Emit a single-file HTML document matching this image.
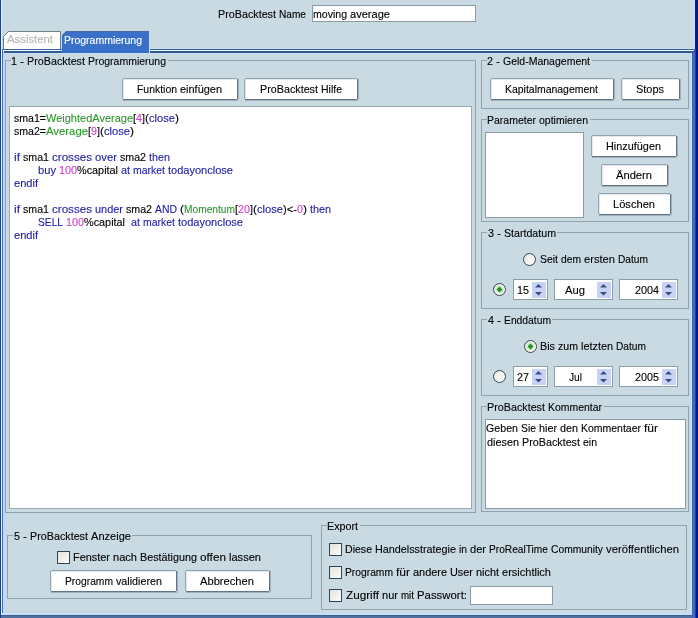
<!DOCTYPE html>
<html><head><meta charset="utf-8"><title>ProBacktest</title>
<style>
html,body{margin:0;padding:0}
body{width:698px;height:618px;overflow:hidden;position:relative;background:#c9dae3;font-family:"Liberation Sans",sans-serif;font-size:11px}
#ui>div{position:absolute}
#tx text{white-space:pre;stroke-width:0.12px}
#tx tspan{}
#tx{position:absolute;left:0;top:0;fill:#000;stroke:#000;font-family:"Liberation Sans",sans-serif;font-size:11px;pointer-events:none;will-change:transform}
</style></head><body>
<div id="ui">
<div style="left:0px;top:0px;width:1px;height:618px;background:#1a4088"></div>
<div style="left:1px;top:0px;width:1px;height:615px;background:#d0fcfc"></div>
<div style="left:693px;top:0px;width:1px;height:49px;background:#c4e0fc"></div>
<div style="left:694px;top:0px;width:1px;height:49px;background:#c0dcfc"></div>
<div style="left:691px;top:53px;width:1px;height:562px;background:#d4e4f8"></div>
<div style="left:692px;top:53px;width:1px;height:565px;background:#3068b8"></div>
<div style="left:693px;top:53px;width:1px;height:565px;background:#3c70c8"></div>
<div style="left:694px;top:53px;width:1px;height:565px;background:#4a64c0"></div>
<div style="left:695px;top:0px;width:1px;height:618px;background:#283a90"></div>
<div style="left:696px;top:0px;width:1px;height:618px;background:#001890"></div>
<div style="left:697px;top:0px;width:1px;height:618px;background:#001890"></div>
<div style="left:695px;top:0px;width:1px;height:49px;background:#0a1a9a"></div>
<div style="left:2px;top:613px;width:690px;height:1px;background:#c4e0fc"></div>
<div style="left:1px;top:614px;width:691px;height:1px;background:#c4e0fc"></div>
<div style="left:1px;top:615px;width:691px;height:1px;background:#40608c"></div>
<div style="left:1px;top:616px;width:691px;height:1px;background:#5070a0"></div>
<div style="left:1px;top:617px;width:691px;height:1px;background:#5070a0"></div>
<div style="left:312px;top:5px;width:164px;height:17px;background:#fff;border:1px solid #8b9ba6;box-sizing:border-box"></div>
<div style="left:2px;top:48px;width:693px;height:1px;background:#c4e0fc"></div>
<div style="left:2px;top:49px;width:693px;height:1px;background:#40609c"></div>
<div style="left:2px;top:50px;width:692px;height:1px;background:#e0fcfc"></div>
<div style="left:2px;top:51px;width:692px;height:1px;background:#385890"></div>
<div style="left:2px;top:52px;width:692px;height:1px;background:#385890"></div>
<div style="left:4px;top:53px;width:687px;height:1px;background:#c4e0fc"></div>
<div style="left:694px;top:50px;width:1px;height:3px;background:#3a5aa0"></div>
<div style="left:2px;top:49px;width:1px;height:564px;background:#4a6aa8"></div>
<div style="left:3px;top:51px;width:1px;height:562px;background:#c4dcfc"></div>
<div style="left:4px;top:53px;width:1px;height:560px;background:#c0d4f0"></div>
<svg style="position:absolute;left:3px;top:31px" width="58" height="18"><path d="M0.5 18 V5.5 L5.5 0.5 H57.5 V18" fill="#fdfdfb" stroke="#6f7f86" stroke-width="1"/></svg>
<svg style="position:absolute;left:62px;top:31px" width="88" height="22"><path d="M0 22 V4 L4 0 H87 V22 Z" fill="#3a70c8"/><path d="M0.5 4.5 L4.5 0.5 H86.5" fill="none" stroke="#4a6aa4"/><path d="M87.5 1 V22" stroke="#c4e0fc"/></svg>
<div style="left:5px;top:60px;width:471px;height:453px;border:1px solid #8fa3ae;box-sizing:border-box"></div>
<div style="left:11px;top:54px;width:157px;height:12px;background:#c9dae3"></div>
<div style="left:123px;top:79px;width:114px;height:20px;background:#fff"></div>
<div style="left:123px;top:78px;width:114px;height:1px;background:#94a4b0"></div>
<div style="left:122px;top:79px;width:1px;height:20px;background:#94a4b0"></div>
<div style="left:237px;top:79px;width:1px;height:20px;background:#647480"></div>
<div style="left:123px;top:99px;width:114px;height:1px;background:#647480"></div>
<div style="left:238px;top:79px;width:1px;height:21px;background:#a0b0bc"></div>
<div style="left:123px;top:100px;width:115px;height:1px;background:#a0b0bc"></div>
<div style="left:123px;top:79px;width:114px;height:1px;background:#e2e8ec"></div>
<div style="left:123px;top:79px;width:1px;height:20px;background:#e2e8ec"></div>
<div style="left:245px;top:79px;width:112px;height:20px;background:#fff"></div>
<div style="left:245px;top:78px;width:112px;height:1px;background:#94a4b0"></div>
<div style="left:244px;top:79px;width:1px;height:20px;background:#94a4b0"></div>
<div style="left:357px;top:79px;width:1px;height:20px;background:#647480"></div>
<div style="left:245px;top:99px;width:112px;height:1px;background:#647480"></div>
<div style="left:358px;top:79px;width:1px;height:21px;background:#a0b0bc"></div>
<div style="left:245px;top:100px;width:113px;height:1px;background:#a0b0bc"></div>
<div style="left:245px;top:79px;width:112px;height:1px;background:#e2e8ec"></div>
<div style="left:245px;top:79px;width:1px;height:20px;background:#e2e8ec"></div>
<div style="left:9px;top:106px;width:463px;height:403px;background:#fff;border:1px solid #98aab0;box-sizing:border-box"></div>
<div style="left:481px;top:60px;width:208px;height:49px;border:1px solid #8fa3ae;box-sizing:border-box"></div>
<div style="left:487px;top:54px;width:105px;height:12px;background:#c9dae3"></div>
<div style="left:491px;top:79px;width:122px;height:20px;background:#fff"></div>
<div style="left:491px;top:78px;width:122px;height:1px;background:#94a4b0"></div>
<div style="left:490px;top:79px;width:1px;height:20px;background:#94a4b0"></div>
<div style="left:613px;top:79px;width:1px;height:20px;background:#647480"></div>
<div style="left:491px;top:99px;width:122px;height:1px;background:#647480"></div>
<div style="left:614px;top:79px;width:1px;height:21px;background:#a0b0bc"></div>
<div style="left:491px;top:100px;width:123px;height:1px;background:#a0b0bc"></div>
<div style="left:491px;top:79px;width:122px;height:1px;background:#e2e8ec"></div>
<div style="left:491px;top:79px;width:1px;height:20px;background:#e2e8ec"></div>
<div style="left:622px;top:79px;width:57px;height:20px;background:#fff"></div>
<div style="left:622px;top:78px;width:57px;height:1px;background:#94a4b0"></div>
<div style="left:621px;top:79px;width:1px;height:20px;background:#94a4b0"></div>
<div style="left:679px;top:79px;width:1px;height:20px;background:#647480"></div>
<div style="left:622px;top:99px;width:57px;height:1px;background:#647480"></div>
<div style="left:680px;top:79px;width:1px;height:21px;background:#a0b0bc"></div>
<div style="left:622px;top:100px;width:58px;height:1px;background:#a0b0bc"></div>
<div style="left:622px;top:79px;width:57px;height:1px;background:#e2e8ec"></div>
<div style="left:622px;top:79px;width:1px;height:20px;background:#e2e8ec"></div>
<div style="left:481px;top:119px;width:208px;height:103px;border:1px solid #8fa3ae;box-sizing:border-box"></div>
<div style="left:487px;top:113px;width:103px;height:12px;background:#c9dae3"></div>
<div style="left:485px;top:132px;width:99px;height:86px;background:#fff;border:1px solid #8b9ba6;box-sizing:border-box"></div>
<div style="left:592px;top:136px;width:84px;height:20px;background:#fff"></div>
<div style="left:592px;top:135px;width:84px;height:1px;background:#94a4b0"></div>
<div style="left:591px;top:136px;width:1px;height:20px;background:#94a4b0"></div>
<div style="left:676px;top:136px;width:1px;height:20px;background:#647480"></div>
<div style="left:592px;top:156px;width:84px;height:1px;background:#647480"></div>
<div style="left:677px;top:136px;width:1px;height:21px;background:#a0b0bc"></div>
<div style="left:592px;top:157px;width:85px;height:1px;background:#a0b0bc"></div>
<div style="left:592px;top:136px;width:84px;height:1px;background:#e2e8ec"></div>
<div style="left:592px;top:136px;width:1px;height:20px;background:#e2e8ec"></div>
<div style="left:602px;top:165px;width:65px;height:20px;background:#fff"></div>
<div style="left:602px;top:164px;width:65px;height:1px;background:#94a4b0"></div>
<div style="left:601px;top:165px;width:1px;height:20px;background:#94a4b0"></div>
<div style="left:667px;top:165px;width:1px;height:20px;background:#647480"></div>
<div style="left:602px;top:185px;width:65px;height:1px;background:#647480"></div>
<div style="left:668px;top:165px;width:1px;height:21px;background:#a0b0bc"></div>
<div style="left:602px;top:186px;width:66px;height:1px;background:#a0b0bc"></div>
<div style="left:602px;top:165px;width:65px;height:1px;background:#e2e8ec"></div>
<div style="left:602px;top:165px;width:1px;height:20px;background:#e2e8ec"></div>
<div style="left:599px;top:194px;width:71px;height:20px;background:#fff"></div>
<div style="left:599px;top:193px;width:71px;height:1px;background:#94a4b0"></div>
<div style="left:598px;top:194px;width:1px;height:20px;background:#94a4b0"></div>
<div style="left:670px;top:194px;width:1px;height:20px;background:#647480"></div>
<div style="left:599px;top:214px;width:71px;height:1px;background:#647480"></div>
<div style="left:671px;top:194px;width:1px;height:21px;background:#a0b0bc"></div>
<div style="left:599px;top:215px;width:72px;height:1px;background:#a0b0bc"></div>
<div style="left:599px;top:194px;width:71px;height:1px;background:#e2e8ec"></div>
<div style="left:599px;top:194px;width:1px;height:20px;background:#e2e8ec"></div>
<div style="left:481px;top:232px;width:208px;height:77px;border:1px solid #8fa3ae;box-sizing:border-box"></div>
<div style="left:487px;top:226px;width:70px;height:12px;background:#c9dae3"></div>
<svg style="position:absolute;left:523px;top:253px" width="13" height="13"><defs><linearGradient id="rg523253" x1="0" y1="0" x2="1" y2="1"><stop offset="0" stop-color="#e6e8e0"/><stop offset="1" stop-color="#ffffff"/></linearGradient></defs><circle cx="6.5" cy="6.5" r="6" fill="url(#rg523253)" stroke="#36464f" stroke-width="1"/></svg>
<svg style="position:absolute;left:493px;top:283px" width="13" height="13"><defs><linearGradient id="rg493283" x1="0" y1="0" x2="1" y2="1"><stop offset="0" stop-color="#e6e8e0"/><stop offset="1" stop-color="#ffffff"/></linearGradient></defs><circle cx="6.5" cy="6.5" r="6" fill="url(#rg493283)" stroke="#36464f" stroke-width="1"/><circle cx="6.5" cy="6.5" r="3.8" fill="#c4f0bc"/><path d="M6.5 3.6 L9.4 6.5 L6.5 9.4 L3.6 6.5 Z" fill="#2e8a2e"/></svg>
<div style="left:513px;top:279px;width:35px;height:21px;background:#fff;border:1px solid #8d9da8;box-sizing:border-box"></div>
<div style="left:532px;top:282px;width:14px;height:16px;background:#c6d2f6"></div>
<svg style="position:absolute;left:532px;top:282px" width="14" height="16"><path d="M3 5.5 L6.5 2 L10 5.5 Z M3 10 L6.5 13.5 L10 10 Z" fill="#3e4c82"/></svg>
<div style="left:554px;top:279px;width:59px;height:21px;background:#fff;border:1px solid #8d9da8;box-sizing:border-box"></div>
<div style="left:597px;top:282px;width:14px;height:16px;background:#c6d2f6"></div>
<svg style="position:absolute;left:597px;top:282px" width="14" height="16"><path d="M3 5.5 L6.5 2 L10 5.5 Z M3 10 L6.5 13.5 L10 10 Z" fill="#3e4c82"/></svg>
<div style="left:619px;top:279px;width:59px;height:21px;background:#fff;border:1px solid #8d9da8;box-sizing:border-box"></div>
<div style="left:662px;top:282px;width:14px;height:16px;background:#c6d2f6"></div>
<svg style="position:absolute;left:662px;top:282px" width="14" height="16"><path d="M3 5.5 L6.5 2 L10 5.5 Z M3 10 L6.5 13.5 L10 10 Z" fill="#3e4c82"/></svg>
<div style="left:481px;top:319px;width:208px;height:77px;border:1px solid #8fa3ae;box-sizing:border-box"></div>
<div style="left:487px;top:313px;width:65px;height:12px;background:#c9dae3"></div>
<svg style="position:absolute;left:524px;top:340px" width="13" height="13"><defs><linearGradient id="rg524340" x1="0" y1="0" x2="1" y2="1"><stop offset="0" stop-color="#e6e8e0"/><stop offset="1" stop-color="#ffffff"/></linearGradient></defs><circle cx="6.5" cy="6.5" r="6" fill="url(#rg524340)" stroke="#36464f" stroke-width="1"/><circle cx="6.5" cy="6.5" r="3.8" fill="#c4f0bc"/><path d="M6.5 3.6 L9.4 6.5 L6.5 9.4 L3.6 6.5 Z" fill="#2e8a2e"/></svg>
<svg style="position:absolute;left:493px;top:370px" width="13" height="13"><defs><linearGradient id="rg493370" x1="0" y1="0" x2="1" y2="1"><stop offset="0" stop-color="#e6e8e0"/><stop offset="1" stop-color="#ffffff"/></linearGradient></defs><circle cx="6.5" cy="6.5" r="6" fill="url(#rg493370)" stroke="#36464f" stroke-width="1"/></svg>
<div style="left:513px;top:366px;width:35px;height:21px;background:#fff;border:1px solid #8d9da8;box-sizing:border-box"></div>
<div style="left:532px;top:369px;width:14px;height:16px;background:#c6d2f6"></div>
<svg style="position:absolute;left:532px;top:369px" width="14" height="16"><path d="M3 5.5 L6.5 2 L10 5.5 Z M3 10 L6.5 13.5 L10 10 Z" fill="#3e4c82"/></svg>
<div style="left:554px;top:366px;width:59px;height:21px;background:#fff;border:1px solid #8d9da8;box-sizing:border-box"></div>
<div style="left:597px;top:369px;width:14px;height:16px;background:#c6d2f6"></div>
<svg style="position:absolute;left:597px;top:369px" width="14" height="16"><path d="M3 5.5 L6.5 2 L10 5.5 Z M3 10 L6.5 13.5 L10 10 Z" fill="#3e4c82"/></svg>
<div style="left:619px;top:366px;width:59px;height:21px;background:#fff;border:1px solid #8d9da8;box-sizing:border-box"></div>
<div style="left:662px;top:369px;width:14px;height:16px;background:#c6d2f6"></div>
<svg style="position:absolute;left:662px;top:369px" width="14" height="16"><path d="M3 5.5 L6.5 2 L10 5.5 Z M3 10 L6.5 13.5 L10 10 Z" fill="#3e4c82"/></svg>
<div style="left:481px;top:406px;width:208px;height:106px;border:1px solid #8fa3ae;box-sizing:border-box"></div>
<div style="left:487px;top:400px;width:117px;height:12px;background:#c9dae3"></div>
<div style="left:485px;top:419px;width:201px;height:90px;background:#fff;border:1px solid #8b9ba6;box-sizing:border-box"></div>
<div style="left:7px;top:535px;width:305px;height:64px;border:1px solid #8fa3ae;box-sizing:border-box"></div>
<div style="left:13px;top:529px;width:119px;height:12px;background:#c9dae3"></div>
<div style="left:57px;top:551px;width:13px;height:13px;border:1px solid #2c4860;box-sizing:border-box;background:linear-gradient(135deg,#e6e2da,#fafcfc)"></div>
<div style="left:51px;top:571px;width:125px;height:20px;background:#fff"></div>
<div style="left:51px;top:570px;width:125px;height:1px;background:#94a4b0"></div>
<div style="left:50px;top:571px;width:1px;height:20px;background:#94a4b0"></div>
<div style="left:176px;top:571px;width:1px;height:20px;background:#647480"></div>
<div style="left:51px;top:591px;width:125px;height:1px;background:#647480"></div>
<div style="left:177px;top:571px;width:1px;height:21px;background:#a0b0bc"></div>
<div style="left:51px;top:592px;width:126px;height:1px;background:#a0b0bc"></div>
<div style="left:51px;top:571px;width:125px;height:1px;background:#e2e8ec"></div>
<div style="left:51px;top:571px;width:1px;height:20px;background:#e2e8ec"></div>
<div style="left:186px;top:571px;width:83px;height:20px;background:#fff"></div>
<div style="left:186px;top:570px;width:83px;height:1px;background:#94a4b0"></div>
<div style="left:185px;top:571px;width:1px;height:20px;background:#94a4b0"></div>
<div style="left:269px;top:571px;width:1px;height:20px;background:#647480"></div>
<div style="left:186px;top:591px;width:83px;height:1px;background:#647480"></div>
<div style="left:270px;top:571px;width:1px;height:21px;background:#a0b0bc"></div>
<div style="left:186px;top:592px;width:84px;height:1px;background:#a0b0bc"></div>
<div style="left:186px;top:571px;width:83px;height:1px;background:#e2e8ec"></div>
<div style="left:186px;top:571px;width:1px;height:20px;background:#e2e8ec"></div>
<div style="left:321px;top:525px;width:366px;height:85px;border:1px solid #8fa3ae;box-sizing:border-box"></div>
<div style="left:327px;top:519px;width:33px;height:12px;background:#c9dae3"></div>
<div style="left:329px;top:543px;width:13px;height:13px;border:1px solid #2c4860;box-sizing:border-box;background:linear-gradient(135deg,#e6e2da,#fafcfc)"></div>
<div style="left:329px;top:566px;width:13px;height:13px;border:1px solid #2c4860;box-sizing:border-box;background:linear-gradient(135deg,#e6e2da,#fafcfc)"></div>
<div style="left:329px;top:589px;width:13px;height:13px;border:1px solid #2c4860;box-sizing:border-box;background:linear-gradient(135deg,#e6e2da,#fafcfc)"></div>
<div style="left:470px;top:586px;width:83px;height:19px;background:#fff;border:1px solid #8b9ba6;box-sizing:border-box"></div>
</div>
<svg id="tx" width="698" height="618" xml:space="preserve">
<text y="18"><tspan x="218" textLength="58" lengthAdjust="spacingAndGlyphs">ProBacktest</tspan> <tspan x="279" textLength="27" lengthAdjust="spacingAndGlyphs">Name</tspan></text>
<text y="18"><tspan x="313" textLength="34" lengthAdjust="spacingAndGlyphs">moving</tspan> <tspan x="350" textLength="40" lengthAdjust="spacingAndGlyphs">average</tspan></text>
<text y="43" fill="#b4b4b4" stroke="#b4b4b4"><tspan x="7" textLength="46" lengthAdjust="spacingAndGlyphs">Assistent</tspan></text>
<text y="44" fill="#ffffff" stroke="#ffffff"><tspan x="64" textLength="78" lengthAdjust="spacingAndGlyphs">Programmierung</tspan></text>
<text y="65"><tspan x="11" textLength="6" lengthAdjust="spacingAndGlyphs">1</tspan> <tspan x="20" textLength="4" lengthAdjust="spacingAndGlyphs">-</tspan> <tspan x="27" textLength="58" lengthAdjust="spacingAndGlyphs">ProBacktest</tspan> <tspan x="88" textLength="78" lengthAdjust="spacingAndGlyphs">Programmierung</tspan></text>
<text y="93"><tspan x="137" textLength="40" lengthAdjust="spacingAndGlyphs">Funktion</tspan> <tspan x="180" textLength="42" lengthAdjust="spacingAndGlyphs">einfügen</tspan></text>
<text y="93"><tspan x="260" textLength="58" lengthAdjust="spacingAndGlyphs">ProBacktest</tspan> <tspan x="321" textLength="21" lengthAdjust="spacingAndGlyphs">Hilfe</tspan></text>
<text y="122"><tspan x="14" textLength="32" lengthAdjust="spacingAndGlyphs">sma1=</tspan></text>
<text y="122" fill="#2a982a" stroke="#2a982a"><tspan x="46" textLength="87" lengthAdjust="spacingAndGlyphs">WeightedAverage</tspan></text>
<text y="122"><tspan x="133" textLength="3" lengthAdjust="spacingAndGlyphs">[</tspan></text>
<text y="122" fill="#cc40cc" stroke="#cc40cc"><tspan x="136" textLength="6" lengthAdjust="spacingAndGlyphs">4</tspan></text>
<text y="122"><tspan x="142" textLength="3" lengthAdjust="spacingAndGlyphs">]</tspan></text>
<text y="122"><tspan x="145" textLength="4" lengthAdjust="spacingAndGlyphs">(</tspan></text>
<text y="122" fill="#1c1ca4" stroke="#1c1ca4"><tspan x="149" textLength="26" lengthAdjust="spacingAndGlyphs">close</tspan></text>
<text y="122"><tspan x="175" textLength="4" lengthAdjust="spacingAndGlyphs">)</tspan></text>
<text y="135"><tspan x="14" textLength="32" lengthAdjust="spacingAndGlyphs">sma2=</tspan></text>
<text y="135" fill="#2a982a" stroke="#2a982a"><tspan x="46" textLength="42" lengthAdjust="spacingAndGlyphs">Average</tspan></text>
<text y="135"><tspan x="88" textLength="3" lengthAdjust="spacingAndGlyphs">[</tspan></text>
<text y="135" fill="#cc40cc" stroke="#cc40cc"><tspan x="91" textLength="6" lengthAdjust="spacingAndGlyphs">9</tspan></text>
<text y="135"><tspan x="97" textLength="3" lengthAdjust="spacingAndGlyphs">]</tspan></text>
<text y="135"><tspan x="100" textLength="4" lengthAdjust="spacingAndGlyphs">(</tspan></text>
<text y="135" fill="#1c1ca4" stroke="#1c1ca4"><tspan x="104" textLength="26" lengthAdjust="spacingAndGlyphs">close</tspan></text>
<text y="135"><tspan x="130" textLength="4" lengthAdjust="spacingAndGlyphs">)</tspan></text>
<text y="161" fill="#1c1ca4" stroke="#1c1ca4"><tspan x="14" textLength="6" lengthAdjust="spacingAndGlyphs">if</tspan></text>
<text y="161"> <tspan x="23" textLength="26" lengthAdjust="spacingAndGlyphs">sma1</tspan> </text>
<text y="161" fill="#1c1ca4" stroke="#1c1ca4"><tspan x="52" textLength="40" lengthAdjust="spacingAndGlyphs">crosses</tspan> <tspan x="95" textLength="22" lengthAdjust="spacingAndGlyphs">over</tspan></text>
<text y="161"> <tspan x="120" textLength="26" lengthAdjust="spacingAndGlyphs">sma2</tspan> </text>
<text y="161" fill="#1c1ca4" stroke="#1c1ca4"><tspan x="149" textLength="21" lengthAdjust="spacingAndGlyphs">then</tspan></text>
<text y="174" fill="#1c1ca4" stroke="#1c1ca4"><tspan x="38" textLength="18" lengthAdjust="spacingAndGlyphs">buy</tspan></text>
<text y="174"> </text>
<text y="174" fill="#cc40cc" stroke="#cc40cc"><tspan x="59" textLength="18" lengthAdjust="spacingAndGlyphs">100</tspan></text>
<text y="174"><tspan x="77" textLength="41" lengthAdjust="spacingAndGlyphs">%capital</tspan> </text>
<text y="174" fill="#1c1ca4" stroke="#1c1ca4"><tspan x="121" textLength="9" lengthAdjust="spacingAndGlyphs">at</tspan> <tspan x="133" textLength="32" lengthAdjust="spacingAndGlyphs">market</tspan> <tspan x="168" textLength="65" lengthAdjust="spacingAndGlyphs">todayonclose</tspan></text>
<text y="187" fill="#1c1ca4" stroke="#1c1ca4"><tspan x="14" textLength="24" lengthAdjust="spacingAndGlyphs">endif</tspan></text>
<text y="213" fill="#1c1ca4" stroke="#1c1ca4"><tspan x="14" textLength="6" lengthAdjust="spacingAndGlyphs">if</tspan></text>
<text y="213"> <tspan x="23" textLength="26" lengthAdjust="spacingAndGlyphs">sma1</tspan> </text>
<text y="213" fill="#1c1ca4" stroke="#1c1ca4"><tspan x="52" textLength="40" lengthAdjust="spacingAndGlyphs">crosses</tspan> <tspan x="95" textLength="28" lengthAdjust="spacingAndGlyphs">under</tspan></text>
<text y="213"> <tspan x="126" textLength="26" lengthAdjust="spacingAndGlyphs">sma2</tspan> </text>
<text y="213" fill="#1c1ca4" stroke="#1c1ca4"><tspan x="155" textLength="22" lengthAdjust="spacingAndGlyphs">AND</tspan></text>
<text y="213"> <tspan x="180" textLength="4" lengthAdjust="spacingAndGlyphs">(</tspan></text>
<text y="213" fill="#2a982a" stroke="#2a982a"><tspan x="184" textLength="51" lengthAdjust="spacingAndGlyphs">Momentum</tspan></text>
<text y="213"><tspan x="235" textLength="3" lengthAdjust="spacingAndGlyphs">[</tspan></text>
<text y="213" fill="#cc40cc" stroke="#cc40cc"><tspan x="238" textLength="12" lengthAdjust="spacingAndGlyphs">20</tspan></text>
<text y="213"><tspan x="250" textLength="3" lengthAdjust="spacingAndGlyphs">]</tspan></text>
<text y="213"><tspan x="253" textLength="4" lengthAdjust="spacingAndGlyphs">(</tspan></text>
<text y="213" fill="#1c1ca4" stroke="#1c1ca4"><tspan x="257" textLength="26" lengthAdjust="spacingAndGlyphs">close</tspan></text>
<text y="213"><tspan x="283" textLength="14" lengthAdjust="spacingAndGlyphs">)&lt;-</tspan></text>
<text y="213" fill="#cc40cc" stroke="#cc40cc"><tspan x="297" textLength="6" lengthAdjust="spacingAndGlyphs">0</tspan></text>
<text y="213"><tspan x="303" textLength="4" lengthAdjust="spacingAndGlyphs">)</tspan> </text>
<text y="213" fill="#1c1ca4" stroke="#1c1ca4"><tspan x="310" textLength="21" lengthAdjust="spacingAndGlyphs">then</tspan></text>
<text y="226" fill="#1c1ca4" stroke="#1c1ca4"><tspan x="38" textLength="25" lengthAdjust="spacingAndGlyphs">SELL</tspan></text>
<text y="226"> </text>
<text y="226" fill="#cc40cc" stroke="#cc40cc"><tspan x="66" textLength="18" lengthAdjust="spacingAndGlyphs">100</tspan></text>
<text y="226"><tspan x="84" textLength="41" lengthAdjust="spacingAndGlyphs">%capital</tspan>  </text>
<text y="226" fill="#1c1ca4" stroke="#1c1ca4"><tspan x="131" textLength="9" lengthAdjust="spacingAndGlyphs">at</tspan> <tspan x="143" textLength="32" lengthAdjust="spacingAndGlyphs">market</tspan> <tspan x="178" textLength="65" lengthAdjust="spacingAndGlyphs">todayonclose</tspan></text>
<text y="239" fill="#1c1ca4" stroke="#1c1ca4"><tspan x="14" textLength="24" lengthAdjust="spacingAndGlyphs">endif</tspan></text>
<text y="65"><tspan x="487" textLength="6" lengthAdjust="spacingAndGlyphs">2</tspan> <tspan x="496" textLength="4" lengthAdjust="spacingAndGlyphs">-</tspan> <tspan x="503" textLength="87" lengthAdjust="spacingAndGlyphs">Geld-Management</tspan></text>
<text y="93"><tspan x="505" textLength="93" lengthAdjust="spacingAndGlyphs">Kapitalmanagement</tspan></text>
<text y="93"><tspan x="636" textLength="28" lengthAdjust="spacingAndGlyphs">Stops</tspan></text>
<text y="124"><tspan x="487" textLength="49" lengthAdjust="spacingAndGlyphs">Parameter</tspan> <tspan x="539" textLength="49" lengthAdjust="spacingAndGlyphs">optimieren</tspan></text>
<text y="150"><tspan x="606" textLength="55" lengthAdjust="spacingAndGlyphs">Hinzufügen</tspan></text>
<text y="179"><tspan x="616" textLength="36" lengthAdjust="spacingAndGlyphs">Ändern</tspan></text>
<text y="208"><tspan x="613" textLength="42" lengthAdjust="spacingAndGlyphs">Löschen</tspan></text>
<text y="237"><tspan x="488" textLength="6" lengthAdjust="spacingAndGlyphs">3</tspan> <tspan x="497" textLength="4" lengthAdjust="spacingAndGlyphs">-</tspan> <tspan x="504" textLength="52" lengthAdjust="spacingAndGlyphs">Startdatum</tspan></text>
<text y="263"><tspan x="540" textLength="18" lengthAdjust="spacingAndGlyphs">Seit</tspan> <tspan x="561" textLength="20" lengthAdjust="spacingAndGlyphs">dem</tspan> <tspan x="584" textLength="31" lengthAdjust="spacingAndGlyphs">ersten</tspan> <tspan x="618" textLength="30" lengthAdjust="spacingAndGlyphs">Datum</tspan></text>
<text y="294"><tspan x="517" textLength="12" lengthAdjust="spacingAndGlyphs">15</tspan></text>
<text y="294"><tspan x="565" textLength="20" lengthAdjust="spacingAndGlyphs">Aug</tspan></text>
<text y="294"><tspan x="635" textLength="24" lengthAdjust="spacingAndGlyphs">2004</tspan></text>
<text y="324"><tspan x="488" textLength="6" lengthAdjust="spacingAndGlyphs">4</tspan> <tspan x="497" textLength="4" lengthAdjust="spacingAndGlyphs">-</tspan> <tspan x="504" textLength="47" lengthAdjust="spacingAndGlyphs">Enddatum</tspan></text>
<text y="350"><tspan x="540" textLength="15" lengthAdjust="spacingAndGlyphs">Bis</tspan> <tspan x="558" textLength="20" lengthAdjust="spacingAndGlyphs">zum</tspan> <tspan x="581" textLength="32" lengthAdjust="spacingAndGlyphs">letzten</tspan> <tspan x="616" textLength="30" lengthAdjust="spacingAndGlyphs">Datum</tspan></text>
<text y="381"><tspan x="517" textLength="12" lengthAdjust="spacingAndGlyphs">27</tspan></text>
<text y="381"><tspan x="569" textLength="13" lengthAdjust="spacingAndGlyphs">Jul</tspan></text>
<text y="381"><tspan x="635" textLength="24" lengthAdjust="spacingAndGlyphs">2005</tspan></text>
<text y="411"><tspan x="487" textLength="58" lengthAdjust="spacingAndGlyphs">ProBacktest</tspan> <tspan x="548" textLength="54" lengthAdjust="spacingAndGlyphs">Kommentar</tspan></text>
<text y="432"><tspan x="486" textLength="32" lengthAdjust="spacingAndGlyphs">Geben</tspan> <tspan x="521" textLength="15" lengthAdjust="spacingAndGlyphs">Sie</tspan> <tspan x="539" textLength="18" lengthAdjust="spacingAndGlyphs">hier</tspan> <tspan x="560" textLength="18" lengthAdjust="spacingAndGlyphs">den</tspan> <tspan x="581" textLength="60" lengthAdjust="spacingAndGlyphs">Kommentaer</tspan> <tspan x="644" textLength="14" lengthAdjust="spacingAndGlyphs">für</tspan></text>
<text y="446"><tspan x="487" textLength="32" lengthAdjust="spacingAndGlyphs">diesen</tspan> <tspan x="522" textLength="58" lengthAdjust="spacingAndGlyphs">ProBacktest</tspan> <tspan x="583" textLength="14" lengthAdjust="spacingAndGlyphs">ein</tspan></text>
<text y="540"><tspan x="14" textLength="6" lengthAdjust="spacingAndGlyphs">5</tspan> <tspan x="23" textLength="4" lengthAdjust="spacingAndGlyphs">-</tspan> <tspan x="30" textLength="58" lengthAdjust="spacingAndGlyphs">ProBacktest</tspan> <tspan x="91" textLength="40" lengthAdjust="spacingAndGlyphs">Anzeige</tspan></text>
<text y="561"><tspan x="73" textLength="37" lengthAdjust="spacingAndGlyphs">Fenster</tspan> <tspan x="113" textLength="24" lengthAdjust="spacingAndGlyphs">nach</tspan> <tspan x="140" textLength="57" lengthAdjust="spacingAndGlyphs">Bestätigung</tspan> <tspan x="200" textLength="26" lengthAdjust="spacingAndGlyphs">offen</tspan> <tspan x="229" textLength="32" lengthAdjust="spacingAndGlyphs">lassen</tspan></text>
<text y="585"><tspan x="65" textLength="48" lengthAdjust="spacingAndGlyphs">Programm</tspan> <tspan x="116" textLength="46" lengthAdjust="spacingAndGlyphs">validieren</tspan></text>
<text y="585"><tspan x="200" textLength="54" lengthAdjust="spacingAndGlyphs">Abbrechen</tspan></text>
<text y="530"><tspan x="327" textLength="31" lengthAdjust="spacingAndGlyphs">Export</tspan></text>
<text y="553"><tspan x="345" textLength="27" lengthAdjust="spacingAndGlyphs">Diese</tspan> <tspan x="375" textLength="81" lengthAdjust="spacingAndGlyphs">Handelsstrategie</tspan> <tspan x="459" textLength="8" lengthAdjust="spacingAndGlyphs">in</tspan> <tspan x="470" textLength="16" lengthAdjust="spacingAndGlyphs">der</tspan> <tspan x="489" textLength="59" lengthAdjust="spacingAndGlyphs">ProRealTime</tspan> <tspan x="551" textLength="52" lengthAdjust="spacingAndGlyphs">Community</tspan> <tspan x="606" textLength="73" lengthAdjust="spacingAndGlyphs">veröffentlichen</tspan></text>
<text y="576"><tspan x="345" textLength="48" lengthAdjust="spacingAndGlyphs">Programm</tspan> <tspan x="396" textLength="14" lengthAdjust="spacingAndGlyphs">für</tspan> <tspan x="413" textLength="34" lengthAdjust="spacingAndGlyphs">andere</tspan> <tspan x="450" textLength="23" lengthAdjust="spacingAndGlyphs">User</tspan> <tspan x="476" textLength="23" lengthAdjust="spacingAndGlyphs">nicht</tspan> <tspan x="502" textLength="49" lengthAdjust="spacingAndGlyphs">ersichtlich</tspan></text>
<text y="599"><tspan x="346" textLength="33" lengthAdjust="spacingAndGlyphs">Zugriff</tspan> <tspan x="382" textLength="16" lengthAdjust="spacingAndGlyphs">nur</tspan> <tspan x="401" textLength="13" lengthAdjust="spacingAndGlyphs">mit</tspan> <tspan x="417" textLength="50" lengthAdjust="spacingAndGlyphs">Passwort:</tspan></text>
</svg>
</body></html>
